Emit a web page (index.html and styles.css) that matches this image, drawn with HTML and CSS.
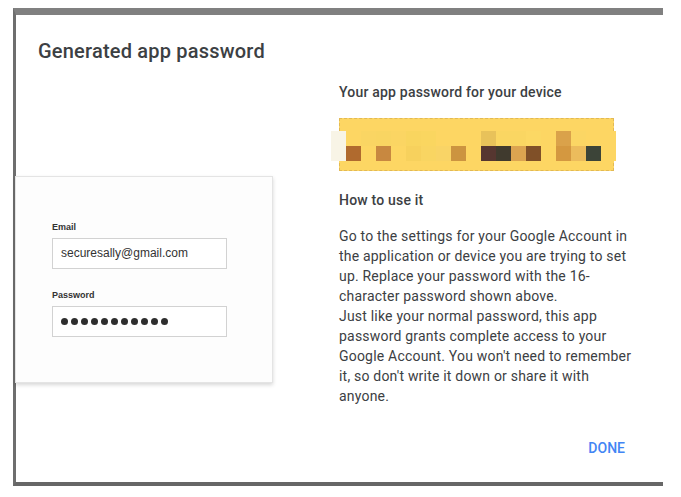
FILE: index.html
```html
<!DOCTYPE html>
<html lang="en">
<head>
<meta charset="utf-8">
<title>Generated app password</title>
<link rel="stylesheet" href="styles.css">
</head>
<body>
<div class="dialog">
  <h1 class="title">Generated app password</h1>
  <div class="main">
    <div class="left">
      <div class="card">
        <div class="label">Email</div>
        <div class="input">securesally@gmail.com</div>
        <div class="label label-pw">Password</div>
        <div class="input dots">
          <span class="dot"></span><span class="dot"></span><span class="dot"></span><span class="dot"></span><span class="dot"></span><span class="dot"></span><span class="dot"></span><span class="dot"></span><span class="dot"></span><span class="dot"></span><span class="dot"></span>
        </div>
      </div>
    </div>
    <div class="right">
      <h2 class="heading">Your app password for your device</h2>
      <div class="pw-box">
        <div class="pixels">
          <span class="px c-white"></span><span class="px"></span><span class="px" style="background:#fad563"></span><span class="px" style="background:#f9d562"></span><span class="px" style="background:#fbd563"></span><span class="px" style="background:#f9d55f"></span><span class="px" style="background:#fad660"></span><span class="px"></span><span class="px"></span><span class="px"></span><span class="px" style="background:#e8c25a"></span><span class="px" style="background:#fad662"></span><span class="px" style="background:#fad662"></span><span class="px" style="background:#fcd864"></span><span class="px"></span><span class="px" style="background:#daa24a"></span><span class="px" style="background:#fbd664"></span><span class="px"></span><span class="px"></span>
          <span class="px c-white"></span><span class="px" style="background:#b06a2e"></span><span class="px"></span><span class="px" style="background:#c88840"></span><span class="px"></span><span class="px" style="background:#f7d15d"></span><span class="px" style="background:#f9d562"></span><span class="px" style="background:#f9d466"></span><span class="px" style="background:#cc9440"></span><span class="px"></span><span class="px" style="background:#563630"></span><span class="px" style="background:#403a2e"></span><span class="px" style="background:#dca450"></span><span class="px" style="background:#805028"></span><span class="px"></span><span class="px" style="background:#d49840"></span><span class="px" style="background:#ecbc5c"></span><span class="px" style="background:#3c4438"></span><span class="px"></span>
        </div>
      </div>
      <h2 class="heading heading-how">How to use it</h2>
      <p class="text">Go to the settings for your Google Account in the application or device you are trying to set up. Replace your password with the 16-character password shown above.<br>Just like your normal password, this app password grants complete access to your Google Account. You won't need to remember it, so don't write it down or share it with anyone.</p>
    </div>
  </div>
  <div class="footer">
    <button class="done" type="button">DONE</button>
  </div>
</div>
</body>
</html>
```

FILE: styles.css
```css
html, body {
  margin: 0;
  padding: 0;
  background: #ffffff;
}

body {
  font-family: Roboto, "Liberation Sans", sans-serif;
  color: #3c4043;
}

.dialog {
  box-sizing: border-box;
  margin: 8px 0 0 13px;
  width: 650px;
  height: 478px;
  border-top: 7px solid #808080;
  border-left: 3px solid #6e6e6e;
  border-bottom: 4px solid #676767;
  background: #ffffff;
  display: flex;
  flex-direction: column;
}

.title {
  margin: 0;
  padding: 24px 0 0 22px;
  font-size: 20px;
  line-height: 24px;
  font-weight: 500;
  letter-spacing: 0.2px;
  color: #3c4043;
}

.main {
  display: flex;
  margin-top: 19px;
}

.left {
  width: 259px;
  margin-left: -1px;
}

.card {
  margin-top: 94px;
  box-sizing: border-box;
  width: 258px;
  height: 207px;
  padding: 45px 0 0 36px;
  background: #fdfdfd;
  border: 1px solid #e4e4e4;
  box-shadow: 0 2px 4px rgba(0, 0, 0, 0.16);
  font-family: "Liberation Sans", Arial, sans-serif;
}

.label {
  font-size: 9px;
  line-height: 11px;
  font-weight: bold;
  color: #333333;
}

.label-pw {
  margin-top: 21px;
}

.input {
  box-sizing: border-box;
  margin-top: 5px;
  width: 175px;
  height: 31px;
  border: 1px solid #d2d2d2;
  background: #ffffff;
  padding-left: 8px;
  font-size: 12px;
  line-height: 29px;
  color: #333333;
}

.dots {
  display: flex;
  align-items: center;
  gap: 3px;
}

.dot {
  width: 7px;
  height: 7px;
  border-radius: 50%;
  background: #2e2e2e;
}

.right {
  margin-left: 65px;
  width: 296px;
}

.heading {
  margin: 0;
  font-size: 14px;
  line-height: 20px;
  font-weight: 500;
  letter-spacing: 0.2px;
  color: #3c4043;
}

.pw-box {
  box-sizing: border-box;
  margin-top: 16px;
  width: 275px;
  height: 53px;
  padding-top: 12px;
  background: #fdd663;
  border: 1px dashed #e2b955;
}

.pixels {
  margin-left: -9px;
  display: grid;
  grid-template-columns: repeat(19, 15px);
  grid-template-rows: repeat(2, 15px);
}

.px {
  background: #fdd663;
}

.c-white {
  background: #f8f4e6;
}

.heading-how {
  margin-top: 19px;
}

.text {
  margin: 16px 0 0 0;
  font-size: 14px;
  line-height: 20px;
  letter-spacing: 0.2px;
  color: #3c4043;
}

.footer {
  display: flex;
  justify-content: flex-end;
  padding-right: 30px;
  margin-top: 24px;
}

.done {
  border: 0;
  background: transparent;
  padding: 8px;
  font-family: Roboto, "Liberation Sans", sans-serif;
  font-size: 14px;
  line-height: 20px;
  font-weight: 500;
  color: #4285f4;
  cursor: pointer;
}
```
